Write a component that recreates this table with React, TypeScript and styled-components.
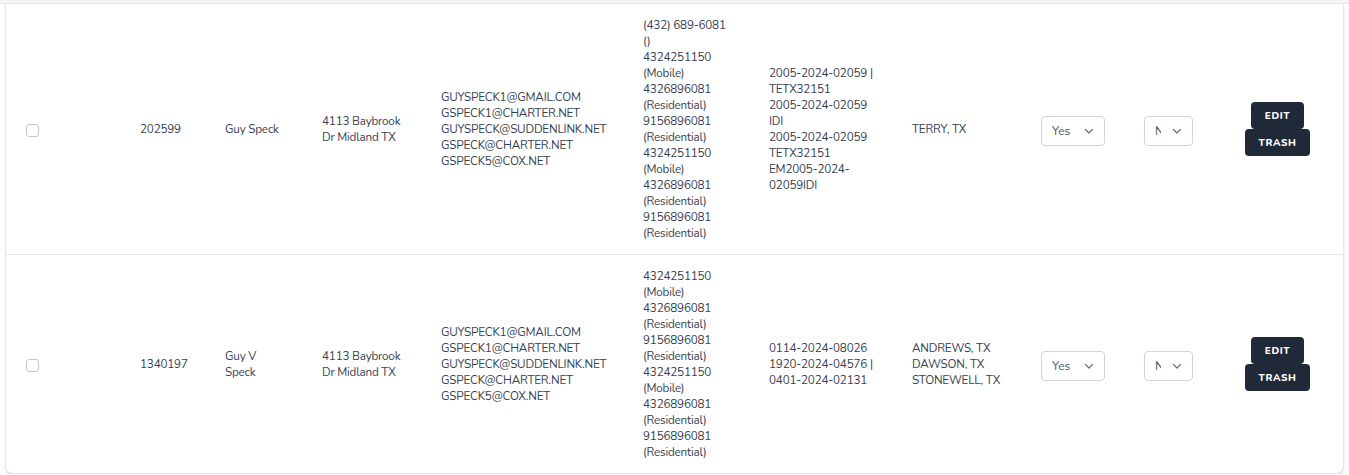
import styled, { createGlobalStyle } from "styled-components";

const GlobalStyle = createGlobalStyle`
  html, body {
    margin: 0;
    padding: 0;
    background: #ffffff;
    font-family: "Nunito", "Lato", "Noto Sans", sans-serif;
    color: #374151;
    overflow: hidden;
  }
`;

const TopStrip = styled.div`
  height: 3px;
  background: #f3f4f6;
  border-bottom: 1px solid #e5e7eb;
`;

const Card = styled.div`
  margin: 0 5px 0 5px;
  background: #ffffff;
  border: 1px solid #e5e7eb;
  border-top: none;
  border-radius: 0 0 8px 8px;
  box-shadow: 0 2px 2px rgba(0, 0, 0, 0.12);
`;

const Row = styled.div`
  display: grid;
  grid-template-columns: 114px 85px 97px 119px 202px 126px 143px 129px 103px 80px 1fr;
  align-items: center;
  padding: 13px 12px 13px 20px;
  font-size: 11.7px;
  letter-spacing: -0.2px;
  line-height: 16px;

  &:not(:last-child) {
    border-bottom: 1px solid #e5e7eb;
  }
`;

const Cell = styled.div<{ $w?: number }>`
  max-width: ${(p) => (p.$w ? `${p.$w}px` : "none")};
`;

const Line = styled.div``;

const Check = styled.span`
  display: block;
  width: 11px;
  height: 11px;
  border: 1px solid #c4c8cf;
  border-radius: 3px;
  background: #fff;
  margin-top: 2px;
`;

const SelectBox = styled.div<{ $w: number }>`
  box-sizing: border-box;
  width: ${(p) => p.$w}px;
  height: 30px;
  margin-top: 3px;
  display: flex;
  align-items: center;
  gap: 10px;
  padding: 0 9px 0 10px;
  border: 1px solid #d1d5db;
  border-radius: 4px;
  background: #fff;
  font-size: 12px;
  letter-spacing: 0;
  color: #4b5563;
`;

const SelectValue = styled.span`
  flex: 1;
  min-width: 0;
  overflow: hidden;
  white-space: nowrap;
`;

const Actions = styled.div`
  display: flex;
  flex-direction: column;
  align-items: center;
`;

const ActionButton = styled.button`
  height: 27px;
  padding: 0 14px;
  border: none;
  border-radius: 4px;
  background: #1f2937;
  color: #ffffff;
  font-family: inherit;
  font-size: 10px;
  font-weight: 800;
  letter-spacing: 0.6px;
  cursor: pointer;
`;

function Chevron() {
  return (
    <svg width="12" height="12" viewBox="0 0 12 12" fill="none" style={{ flexShrink: 0 }}>
      <path d="M2.5 4.5 L6 8 L9.5 4.5" stroke="#6b7280" strokeWidth="1.3" strokeLinecap="round" strokeLinejoin="round" />
    </svg>
  );
}

type Record = {
  id: string;
  name: string;
  address: string;
  emails: string[];
  phones: string[];
  cases: string[];
  counties: string[];
};

const records: Record[] = [
  {
    id: "202599",
    name: "Guy Speck",
    address: "4113 Baybrook Dr Midland TX",
    emails: [
      "GUYSPECK1@GMAIL.COM",
      "GSPECK1@CHARTER.NET",
      "GUYSPECK@SUDDENLINK.NET",
      "GSPECK@CHARTER.NET",
      "GSPECK5@COX.NET",
    ],
    phones: [
      "(432) 689-6081",
      "()",
      "4324251150 (Mobile)",
      "4326896081 (Residential)",
      "9156896081 (Residential)",
      "4324251150 (Mobile)",
      "4326896081 (Residential)",
      "9156896081 (Residential)",
    ],
    cases: [
      "2005-2024-02059 | TETX32151",
      "2005-2024-02059 IDI",
      "2005-2024-02059 TETX32151",
      "EM2005-2024-02059IDI",
    ],
    counties: ["TERRY, TX"],
  },
  {
    id: "1340197",
    name: "Guy V Speck",
    address: "4113 Baybrook Dr Midland TX",
    emails: [
      "GUYSPECK1@GMAIL.COM",
      "GSPECK1@CHARTER.NET",
      "GUYSPECK@SUDDENLINK.NET",
      "GSPECK@CHARTER.NET",
      "GSPECK5@COX.NET",
    ],
    phones: [
      "4324251150 (Mobile)",
      "4326896081 (Residential)",
      "9156896081 (Residential)",
      "4324251150 (Mobile)",
      "4326896081 (Residential)",
      "9156896081 (Residential)",
    ],
    cases: ["0114-2024-08026", "1920-2024-04576 |", "0401-2024-02131"],
    counties: ["ANDREWS, TX", "DAWSON, TX", "STONEWELL, TX"],
  },
];

function RecordRow({ record }: { record: Record }) {
  return (
    <Row role="row">
      <Cell>
        <Check />
      </Cell>
      <Cell>{record.id}</Cell>
      <Cell $w={60}>{record.name}</Cell>
      <Cell $w={88}>{record.address}</Cell>
      <Cell>
        {record.emails.map((e) => (
          <Line key={e}>{e}</Line>
        ))}
      </Cell>
      <Cell $w={96}>
        {record.phones.map((p, i) => (
          <Line key={i}>{p}</Line>
        ))}
      </Cell>
      <Cell $w={110}>
        {record.cases.map((c, i) => (
          <Line key={i}>{c}</Line>
        ))}
      </Cell>
      <Cell>
        {record.counties.map((c) => (
          <Line key={c}>{c}</Line>
        ))}
      </Cell>
      <Cell>
        <SelectBox $w={64}>
          <SelectValue>Yes</SelectValue>
          <Chevron />
        </SelectBox>
      </Cell>
      <Cell>
        <SelectBox $w={49}>
          <SelectValue>No</SelectValue>
          <Chevron />
        </SelectBox>
      </Cell>
      <Actions>
        <ActionButton>EDIT</ActionButton>
        <ActionButton>TRASH</ActionButton>
      </Actions>
    </Row>
  );
}

export default function App() {
  return (
    <>
      <GlobalStyle />
      <TopStrip />
      <Card>
        {records.map((r) => (
          <RecordRow key={r.id} record={r} />
        ))}
      </Card>
    </>
  );
}
